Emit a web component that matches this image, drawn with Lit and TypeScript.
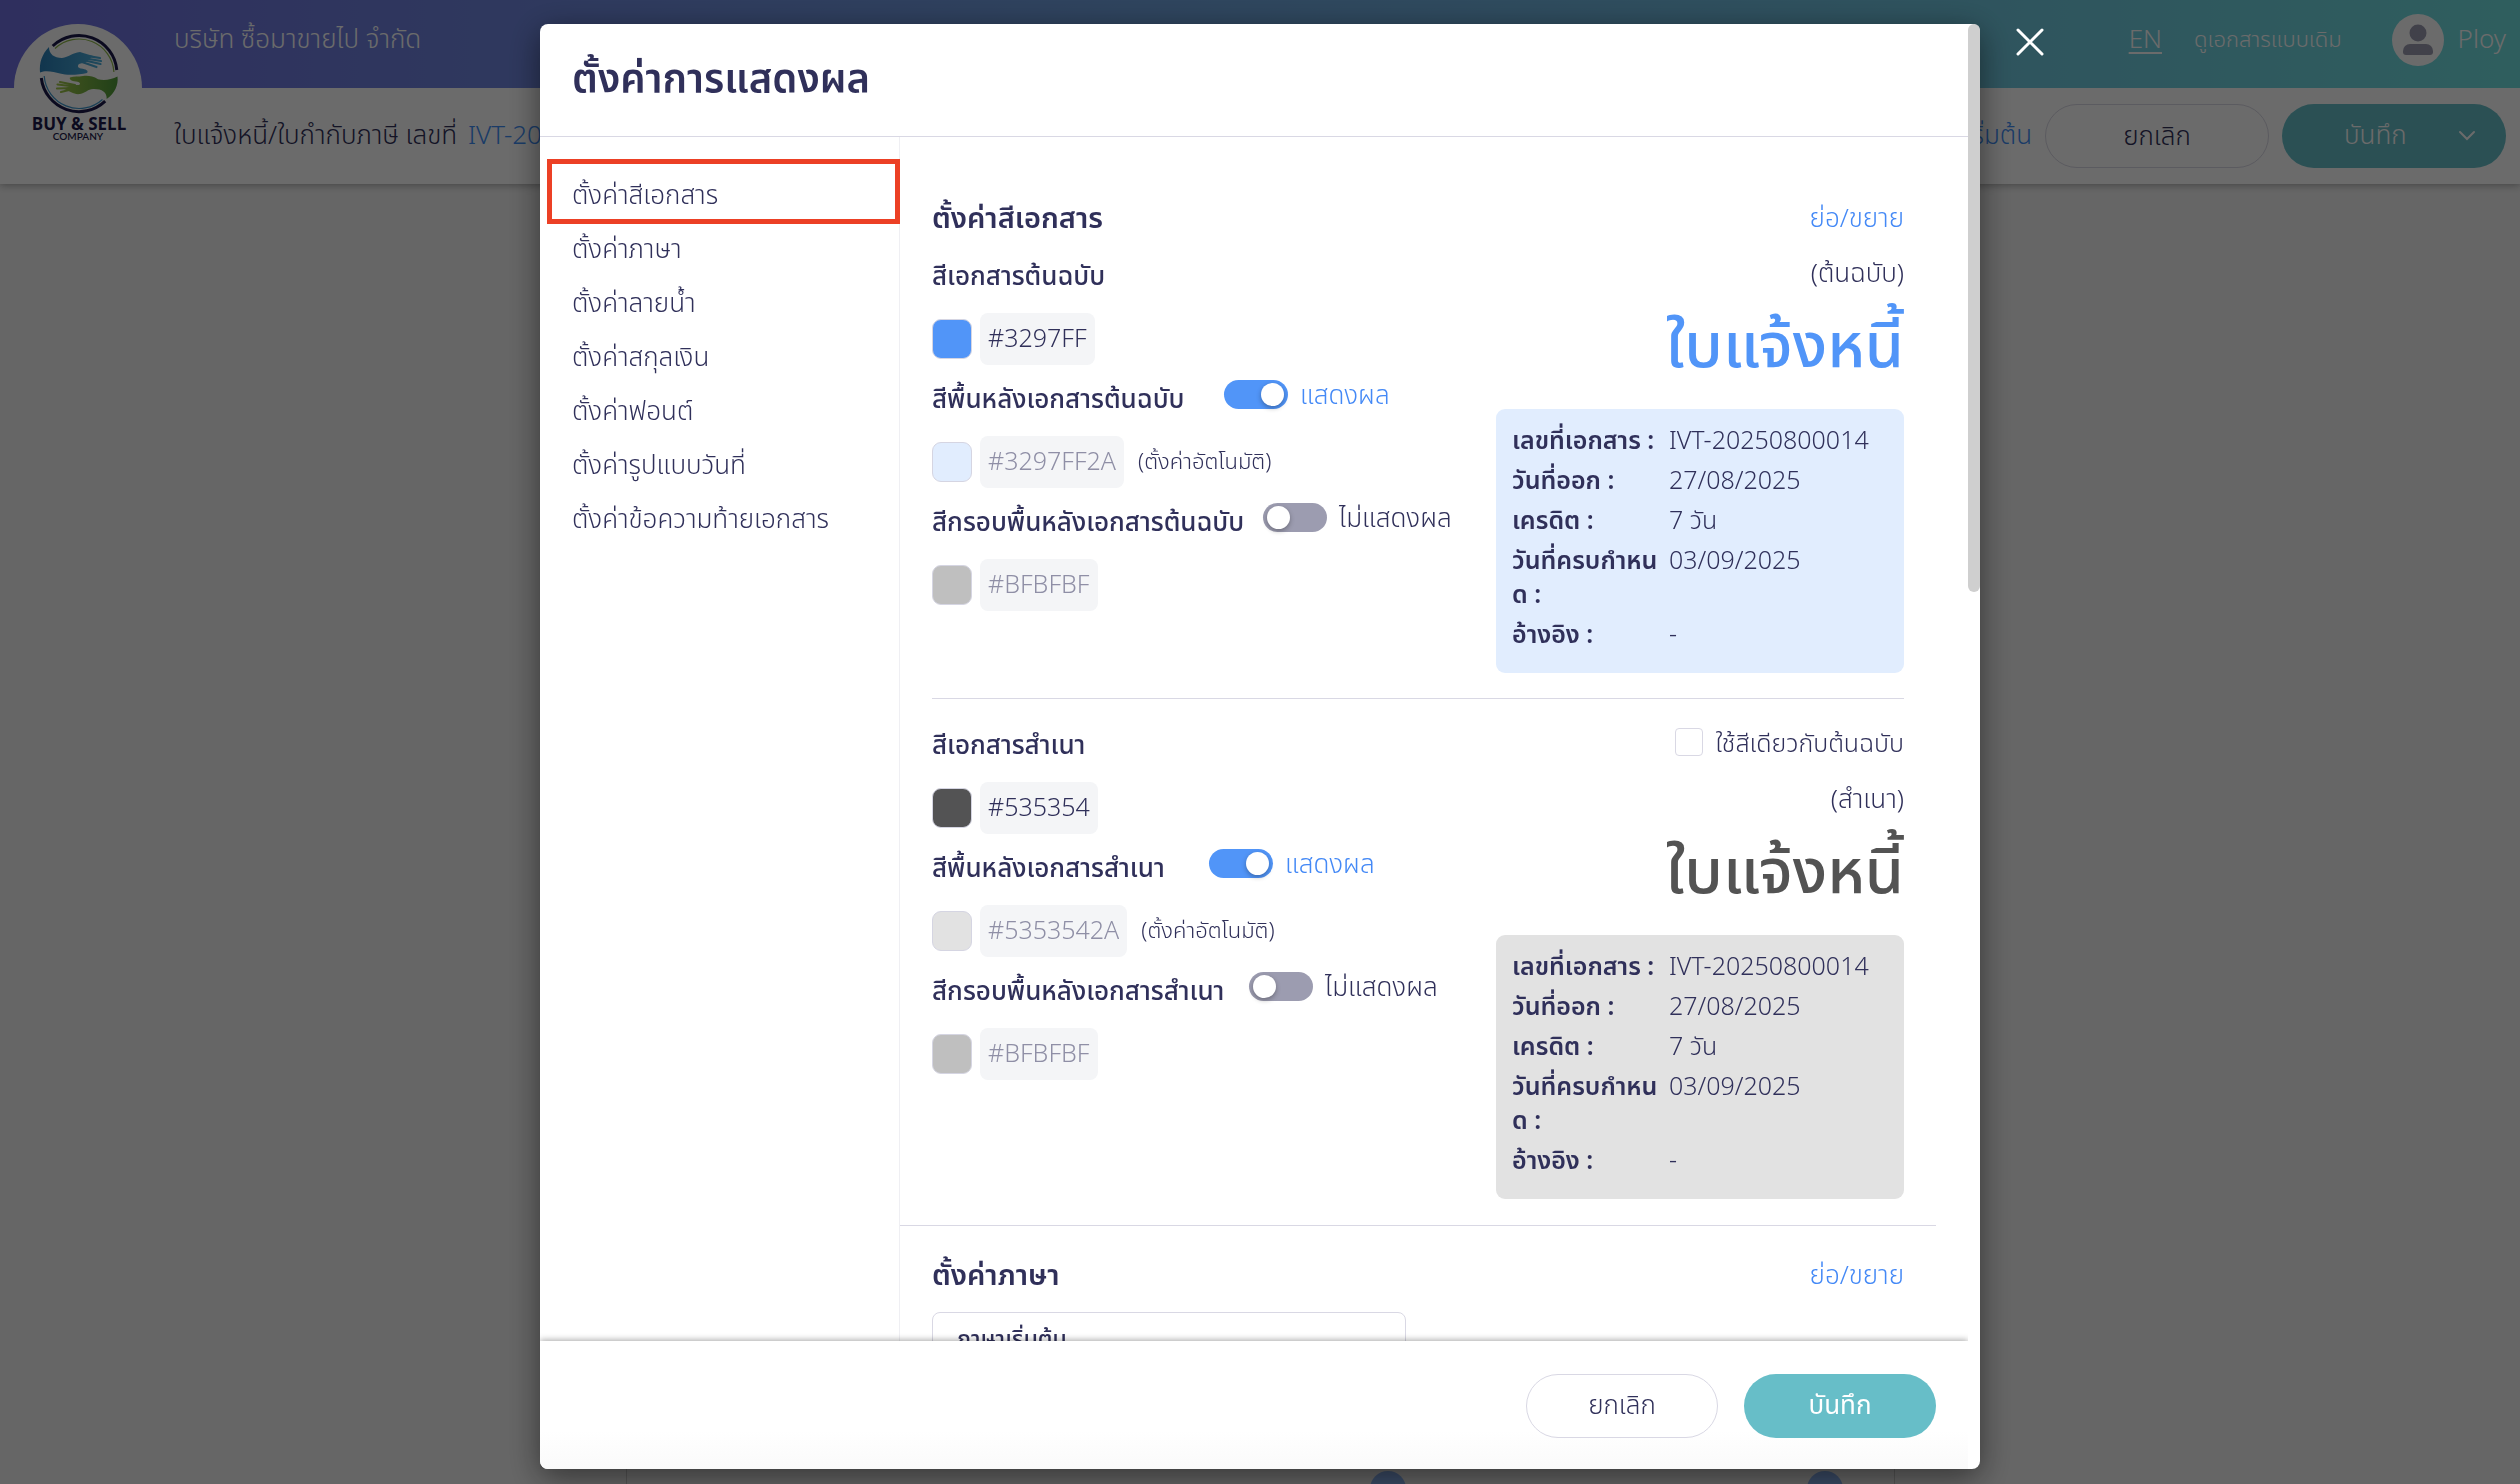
import { LitElement, html, css, nothing } from "lit";
import { customElement, property } from "lit/decorators.js";

interface ColorField {
  label: string;
  hex: string;
  fill: string;
  locked?: boolean;
  auto?: boolean;
  shown?: boolean;
}

interface Variant {
  key: string;
  caption: string;
  title: string;
  panel: string;
  fields: ColorField[];
}

const NAV = [
  "ตั้งค่าสีเอกสาร",
  "ตั้งค่าภาษา",
  "ตั้งค่าลายน้ำ",
  "ตั้งค่าสกุลเงิน",
  "ตั้งค่าฟอนต์",
  "ตั้งค่ารูปแบบวันที่",
  "ตั้งค่าข้อความท้ายเอกสาร",
];

const VARIANTS: Variant[] = [
  {
    key: "original",
    caption: "(ต้นฉบับ)",
    title: "#5195f8",
    panel: "#e1edfe",
    fields: [
      { label: "สีเอกสารต้นฉบับ", hex: "#3297FF", fill: "#5195f8" },
      { label: "สีพื้นหลังเอกสารต้นฉบับ", hex: "#3297FF2A", fill: "#e1edfe", locked: true, auto: true, shown: true },
      { label: "สีกรอบพื้นหลังเอกสารต้นฉบับ", hex: "#BFBFBF", fill: "#bfbfbf", locked: true, shown: false },
    ],
  },
  {
    key: "copy",
    caption: "(สำเนา)",
    title: "#535353",
    panel: "#e2e2e2",
    fields: [
      { label: "สีเอกสารสำเนา", hex: "#535354", fill: "#535354" },
      { label: "สีพื้นหลังเอกสารสำเนา", hex: "#5353542A", fill: "#e2e2e2", locked: true, auto: true, shown: true },
      { label: "สีกรอบพื้นหลังเอกสารสำเนา", hex: "#BFBFBF", fill: "#bfbfbf", locked: true, shown: false },
    ],
  },
];

const DETAILS: [string, string][] = [
  ["เลขที่เอกสาร :", "IVT-20250800014"],
  ["วันที่ออก :", "27/08/2025"],
  ["เครดิต :", "7 วัน"],
  ["วันที่ครบกำหนด :", "03/09/2025"],
  ["อ้างอิง :", "-"],
];

const base = css`
  * {
    box-sizing: border-box;
    margin: 0;
  }
  button,
  input {
    font: inherit;
    color: inherit;
  }
  button {
    cursor: pointer;
  }
  a {
    text-decoration: none;
  }
`;

@customElement("company-logo")
class CompanyLogo extends LitElement {
  static styles = css`
    :host {
      display: block;
      width: 128px;
      height: 128px;
    }
    .mark {
      display: block;
      width: 100%;
      height: 100%;
    }
    .name {
      font: 700 17px "Open Sans", "Liberation Sans", sans-serif;
      fill: #1c1a4a;
    }
    .sub {
      font: 600 10px "Lato", "Liberation Sans", sans-serif;
      fill: #1c1a4a;
    }
  `;
  render() {
    return html`<svg class="mark" viewBox="0 0 128 128" role="img" aria-label="Buy &amp; Sell Company">
      <defs>
        <linearGradient id="blue" gradientUnits="userSpaceOnUse" x1="26" x2="88" y1="0" y2="0">
          <stop offset="0" stop-color="#2a7fb8" />
          <stop offset="1" stop-color="#4fb0dc" />
        </linearGradient>
        <linearGradient id="green" gradientUnits="userSpaceOnUse" x1="42" x2="103" y1="0" y2="0">
          <stop offset="0" stop-color="#a3c74a" />
          <stop offset="1" stop-color="#4f9a3a" />
        </linearGradient>
      </defs>
      <circle cx="64" cy="64" r="64" fill="#fff" />
      <g fill="none">
        <path d="M38.700 22A38 38 0 0 1 102.800 46" stroke="#1c1a4a" stroke-width="3" />
        <path d="M41 24.500A35 35 0 0 1 99.900 48" stroke="#8fb84a" stroke-width="1.200" />
        <path d="M27.300 54A38 38 0 0 0 91.200 77.200" stroke="#1c1a4a" stroke-width="3" />
        <path d="M30.200 52A35 35 0 0 0 88.500 75.500" stroke="#3f97cc" stroke-width="1.200" />
      </g>
      <path fill="url(#blue)" d="M35 23C28 30 25 39 26 48.500C32 46 40 48 46 49.500C54 52 66 50.500 73 49C75 47 72 45 67 44.500C64 44 63 42 65 40L72 38L79 32C75 31 70 29 66 28C58 29 55 33 48 34C40 34 35 30 35 23Z" />
      <path fill="none" stroke="url(#blue)" stroke-width="2.200" stroke-linecap="round" d="M76 32.300L86 34M72 34.500L87 37M70 36.300L86.500 40M68 38L82.500 43" />
      <path fill="url(#green)" d="M92.700 75C101 69 104.500 61 103.500 52.500C97 56 90 56.500 84 55.300C79 52 74 51.500 69 52C64 53 60 52 56 53.500C55 55 57 57 62 57.500C66 58 67 60 65 61L58 61L50 65C56 67 60 71 66 70C72 69 74 64.500 80 65C88 65 93 68 92.700 75Z" />
      <path fill="none" stroke="url(#green)" stroke-width="2.200" stroke-linecap="round" d="M61 61L46 58M60 62.500L43.500 60.500M59 64L43 64.500M57 65.500L47 68" />
      <text class="name" x="65" y="106" text-anchor="middle">BUY &amp; SELL</text>
      <text class="sub" x="64" y="116" text-anchor="middle">COMPANY</text>
    </svg>`;
  }
}

@customElement("editor-page")
class EditorPage extends LitElement {
  static styles = [
    base,
    css`
      :host {
        display: flex;
        flex-direction: column;
        height: 100vh;
        overflow: hidden;
        background: #f3f3f3;
      }
      .top {
        display: flex;
        gap: 32px;
        padding-right: 14px;
        padding-left: 14px;
        background: #fff linear-gradient(90deg, #7070e0, #70e0e0) no-repeat top / 100% 88px;
        box-shadow: 0 1px 8px rgba(0, 0, 0, 0.35);
      }
      .logo {
        margin-top: 24px;
      }
      .bars {
        flex: 1;
        min-width: 0;
      }
      .brandbar {
        display: flex;
        align-items: center;
        justify-content: space-between;
        height: 88px;
        padding-bottom: 12px;
        color: #fff;
      }
      .user {
        display: flex;
        align-items: center;
        gap: 32px;
      }
      .lang {
        color: inherit;
        text-decoration: underline;
        text-underline-offset: 4px;
      }
      .classic {
        color: inherit;
        font-size: 22px;
      }
      .account {
        display: flex;
        align-items: center;
        gap: 14px;
        margin-left: 18px;
      }
      .avatar {
        display: block;
        width: 52px;
        height: 52px;
        margin-top: 4px;
      }
      .toolbar {
        display: flex;
        align-items: center;
        justify-content: space-between;
        height: 96px;
      }
      .doc {
        padding-bottom: 4px;
        font-weight: inherit;
        font-size: inherit;
      }
      .link {
        margin-left: 4px;
        color: #3f8ef5;
      }
      .actions {
        display: flex;
        align-items: center;
        gap: 13px;
      }
      .reset {
        padding-bottom: 4px;
      }
      .pill {
        display: flex;
        align-items: center;
        justify-content: center;
        width: 224px;
        height: 64px;
        padding-bottom: 4px;
        border: 1px solid #d9d8e4;
        border-radius: 32px;
        background: #fff;
      }
      .save {
        justify-content: space-between;
        padding: 0 30px 4px 62px;
        border: 0;
        background: #67bec8;
        color: #fff;
      }
      .chevron {
        width: 18px;
        height: 12px;
        margin-top: 4px;
      }
      .sheet {
        display: flex;
        flex: 1;
        align-items: flex-end;
        justify-content: flex-end;
        gap: 401px;
        align-self: center;
        width: 1269px;
        max-width: 100%;
        min-height: 0;
        padding: 0 51px;
        border: 1px solid #ccc;
        border-width: 0 1px;
      }
      .dot {
        width: 36px;
        height: 36px;
        margin-bottom: -23px;
        padding: 0;
        border: 0;
        border-radius: 50%;
        background: #8cb4f4;
      }
    `,
  ];
  render() {
    return html`
      <header class="top">
        <company-logo class="logo"></company-logo>
        <div class="bars">
          <div class="brandbar">
            <span>บริษัท ซื้อมาขายไป จำกัด</span>
            <div class="user">
              <a class="lang" href="#en">EN</a>
              <a class="classic" href="#classic">ดูเอกสารแบบเดิม</a>
              <span class="account">
                <svg class="avatar" viewBox="0 0 52 52" aria-hidden="true">
                  <circle cx="26" cy="26" r="26" fill="#fff" />
                  <circle cx="26" cy="19" r="8.500" fill="#9c9cb0" />
                  <path d="M11 37a7 7 0 0 1 7-7h16a7 7 0 0 1 7 7v1a3 3 0 0 1-3 3H14a3 3 0 0 1-3-3z" fill="#9c9cb0" />
                </svg>
                <span>Ploy</span>
              </span>
            </div>
          </div>
          <div class="toolbar">
            <h1 class="doc">ใบแจ้งหนี้/ใบกำกับภาษี เลขที่ <a class="link" href="#doc">IVT-20250800014</a></h1>
            <div class="actions">
              <a class="link reset" href="#reset">ค่าเริ่มต้น</a>
              <button class="pill" type="button">ยกเลิก</button>
              <button class="pill save" type="button">
                บันทึก
                <svg class="chevron" viewBox="0 0 18 12" aria-hidden="true">
                  <path d="M2 2l7 7 7-7" fill="none" stroke="#fff" stroke-width="2" stroke-linecap="round" />
                </svg>
              </button>
            </div>
          </div>
        </div>
      </header>
      <main class="sheet">
        <button class="dot" type="button" aria-label="เพิ่มซ้าย"></button>
        <button class="dot" type="button" aria-label="เพิ่มขวา"></button>
      </main>
    `;
  }
}

@customElement("color-field")
class ColorFieldRow extends LitElement {
  @property({ attribute: false }) field!: ColorField;
  static styles = [
    base,
    css`
      :host {
        display: block;
      }
      .head {
        display: flex;
        align-items: center;
        gap: 16px;
        height: 71px;
      }
      .name {
        padding-bottom: 6px;
        font-weight: 500;
        white-space: nowrap;
      }
      .shown {
        min-width: 276px;
      }
      .hidden {
        min-width: 315px;
      }
      :host(.field-copy) .shown {
        min-width: 261px;
      }
      :host(.field-copy) .hidden {
        min-width: 301px;
      }
      .state {
        display: flex;
        align-items: center;
        gap: 12px;
        padding-bottom: 13px;
        white-space: nowrap;
      }
      .on {
        color: #4489f6;
      }
      .toggle {
        display: flex;
        align-items: center;
        width: 64px;
        height: 29px;
        margin: 0;
        padding: 0 4px;
        border-radius: 15px;
        background: #9c9cb0;
        appearance: none;
      }
      .toggle::before {
        width: 23px;
        height: 23px;
        border-radius: 50%;
        background: #fff;
        box-shadow: 0 2px 5px rgba(0, 0, 0, 0.3);
        content: "";
      }
      .toggle:checked {
        justify-content: flex-end;
        background: #5195f8;
      }
      .value {
        display: flex;
        align-items: center;
        gap: 8px;
      }
      .swatch {
        width: 40px;
        height: 40px;
        padding: 0;
        border: 1px solid #d5d5e2;
        border-radius: 9px;
      }
      .hex {
        field-sizing: content;
        height: 52px;
        padding: 0 8px 4px;
        border: 0;
        border-radius: 8px;
        background: #f4f5f7;
        font-size: 25px;
      }
      .hex:disabled {
        color: #8f8fa6;
      }
      .auto {
        margin-left: 6px;
        padding-bottom: 4px;
        font-size: 22px;
      }
    `,
  ];
  render() {
    const f = this.field;
    const hasToggle = f.shown !== undefined;
    return html`
      <div class="head">
        <label class="name ${hasToggle ? (f.shown ? "shown" : "hidden") : ""}" for="hex">${f.label}</label>
        ${hasToggle
          ? html`<label class="state ${f.shown ? "on" : ""}">
              <input class="toggle" type="checkbox" role="switch" .checked=${f.shown!} />
              ${f.shown ? "แสดงผล" : "ไม่แสดงผล"}
            </label>`
          : nothing}
      </div>
      <div class="value">
        <button class="swatch" type="button" aria-label=${f.label} style="background:${f.fill}"></button>
        <input class="hex" id="hex" type="text" .value=${f.hex} ?disabled=${!!f.locked} />
        ${f.auto ? html`<span class="auto">(ตั้งค่าอัตโนมัติ)</span>` : nothing}
      </div>
    `;
  }
}

@customElement("document-preview")
class DocumentPreview extends LitElement {
  @property({ attribute: false }) variant!: Variant;
  static styles = [
    base,
    css`
      :host {
        display: flex;
        flex-direction: column;
        align-items: flex-end;
      }
      .caption {
        height: 40px;
        line-height: 40px;
      }
      .title {
        height: 117px;
        font-weight: 500;
        font-size: 63px;
        line-height: 102px;
      }
      .panel {
        display: grid;
        grid-template-columns: 152px 1fr;
        gap: 6px 5px;
        width: 100%;
        padding: 13px 16px 23px;
        border-radius: 9px;
        font-size: 25px;
        line-height: 34px;
      }
      .key {
        font-weight: 600;
        word-break: break-all;
      }
    `,
  ];
  render() {
    const v = this.variant;
    return html`
      <span class="caption">${v.caption}</span>
      <strong class="title" style="color:${v.title}">ใบแจ้งหนี้</strong>
      <dl class="panel" style="background:${v.panel}">
        ${DETAILS.map(([k, t]) => html`<dt class="key">${k}</dt><dd>${t}</dd>`)}
      </dl>
    `;
  }
}

@customElement("display-settings")
class DisplaySettings extends LitElement {
  static styles = [
    base,
    css`
      :host {
        position: relative;
        display: grid;
        grid-template-columns: 1fr 12px;
        width: 100%;
        max-width: 1440px;
        height: 100%;
        border-radius: 8px;
        background: #fff;
        box-shadow: 0 8px 32px rgba(0, 0, 0, 0.5);
      }
      .dialog {
        display: flex;
        flex-direction: column;
        min-width: 0;
        min-height: 0;
      }
      .thumb {
        height: 568px;
        border-radius: 6px;
        background: #cfcfcf;
      }
      .header {
        display: flex;
        align-items: center;
        flex: none;
        height: 113px;
        padding: 0 32px 4px;
        border-bottom: 1px solid #d9d8e4;
      }
      .heading {
        font-weight: 600;
        font-size: 40px;
      }
      .body {
        display: grid;
        grid-template-columns: 360px 1fr;
        flex: 1;
        min-height: 0;
        overflow: hidden;
      }
      .nav {
        display: flex;
        flex-direction: column;
        padding: 30px 0 0 32px;
        border-right: 1px solid #efeff3;
      }
      .item {
        color: inherit;
        line-height: 54px;
      }
      .content {
        padding-right: 32px;
      }
      .section {
        padding: 60px 32px 26px;
        border-bottom: 1px solid #d9d8e4;
      }
      .language {
        padding-top: 28px;
        border-bottom: 0;
      }
      .bar {
        display: flex;
        align-items: center;
        justify-content: space-between;
        height: 45px;
        padding-bottom: 5px;
      }
      .name {
        font-weight: 600;
        font-size: 29px;
      }
      .fold {
        padding: 0;
        border: 0;
        background: none;
        color: #4489f6;
      }
      .variant {
        display: grid;
        grid-template-columns: 1fr 408px;
      }
      .original {
        padding-bottom: 25px;
        border-bottom: 1px solid #d9d8e4;
      }
      .copy {
        padding-top: 12px;
      }
      .preview {
        padding-top: 10px;
      }
      .same {
        display: flex;
        align-items: center;
        justify-content: flex-end;
        gap: 12px;
        height: 62px;
        font-size: 25px;
      }
      .box {
        width: 28px;
        height: 28px;
        margin: 0;
        border: 1px solid #d9d8e4;
        border-radius: 4px;
        background: #fff;
        appearance: none;
      }
      .copy .preview {
        padding-top: 5px;
      }
      .card {
        width: 474px;
        max-width: 100%;
        height: 160px;
        margin-top: 13px;
        padding: 5px 24px;
        border: 1px solid #d9d8e4;
        border-radius: 8px;
        font-weight: 500;
        font-size: 23px;
        line-height: 40px;
      }
      .footer {
        display: flex;
        align-items: center;
        justify-content: flex-end;
        gap: 26px;
        flex: none;
        height: 128px;
        padding: 2px 32px 0;
        border-radius: 0 0 0 8px;
        background: linear-gradient(#fff 70%, #fafafa);
        box-shadow: 0 -1px 6px rgba(0, 0, 0, 0.35);
        clip-path: inset(-12px 0 0 0);
      }
      .pill {
        width: 192px;
        height: 64px;
        padding-bottom: 5px;
        border: 1px solid #d9d8e4;
        border-radius: 32px;
        background: #fff;
      }
      .save {
        border: 0;
        background: #67bec8;
        color: #fff;
        font-weight: 400;
      }
      .marker {
        position: absolute;
        top: 135px;
        left: 7px;
        width: 353px;
        height: 65px;
        border: 5px solid #ec4025;
        pointer-events: none;
      }
      .close {
        position: absolute;
        top: 0;
        left: calc(100% + 32px);
        width: 36px;
        height: 36px;
        padding: 0;
        border: 0;
        background: none;
      }
      .cross {
        display: block;
        width: 36px;
        height: 36px;
      }
    `,
  ];
  render() {
    return html`
      <div class="dialog" role="dialog" aria-labelledby="heading">
        <header class="header"><h2 class="heading" id="heading">ตั้งค่าการแสดงผล</h2></header>
        <div class="body">
          <nav class="nav">${NAV.map((t, i) => html`<a class="item" href="#section-${i}">${t}</a>`)}</nav>
          <div class="content">
            <section class="section">
              <div class="bar">
                <h3 class="name">ตั้งค่าสีเอกสาร</h3>
                <button class="fold" type="button">ย่อ/ขยาย</button>
              </div>
              ${VARIANTS.map(
                (v) => html`<div class="variant ${v.key}">
                  <div>${v.fields.map((f) => html`<color-field class="field-${v.key}" .field=${f}></color-field>`)}</div>
                  <div>
                    ${v.key === "copy"
                      ? html`<label class="same"><input class="box" type="checkbox" />ใช้สีเดียวกับต้นฉบับ</label>`
                      : nothing}
                    <document-preview class="preview" .variant=${v}></document-preview>
                  </div>
                </div>`
              )}
            </section>
            <section class="section language">
              <div class="bar">
                <h3 class="name">ตั้งค่าภาษา</h3>
                <button class="fold" type="button">ย่อ/ขยาย</button>
              </div>
              <div class="card">ภาษาเริ่มต้น</div>
            </section>
          </div>
        </div>
        <footer class="footer">
          <button class="pill" type="button">ยกเลิก</button>
          <button class="pill save" type="button">บันทึก</button>
        </footer>
      </div>
      <div class="track"><div class="thumb"></div></div>
      <div class="marker"></div>
      <button class="close" type="button" aria-label="ปิด">
        <svg class="cross" viewBox="0 0 36 36" aria-hidden="true">
          <path d="M6 6l24 24M30 6L6 30" fill="none" stroke="#fff" stroke-width="3" stroke-linecap="round" />
        </svg>
      </button>
    `;
  }
}

@customElement("app-root")
class AppRoot extends LitElement {
  static styles = css`
    :host {
      display: block;
      color: #30305a;
      font: 300 26px / 36px "Noto Sans", "Noto Sans Thai", "Open Sans", sans-serif;
    }
    .overlay {
      position: fixed;
      inset: 0;
      box-sizing: border-box;
      display: flex;
      justify-content: center;
      padding: 24px 0 15px;
      background: rgba(0, 0, 0, 0.58);
    }
  `;
  render() {
    return html`
      <editor-page></editor-page>
      <div class="overlay"><display-settings></display-settings></div>
    `;
  }
}
